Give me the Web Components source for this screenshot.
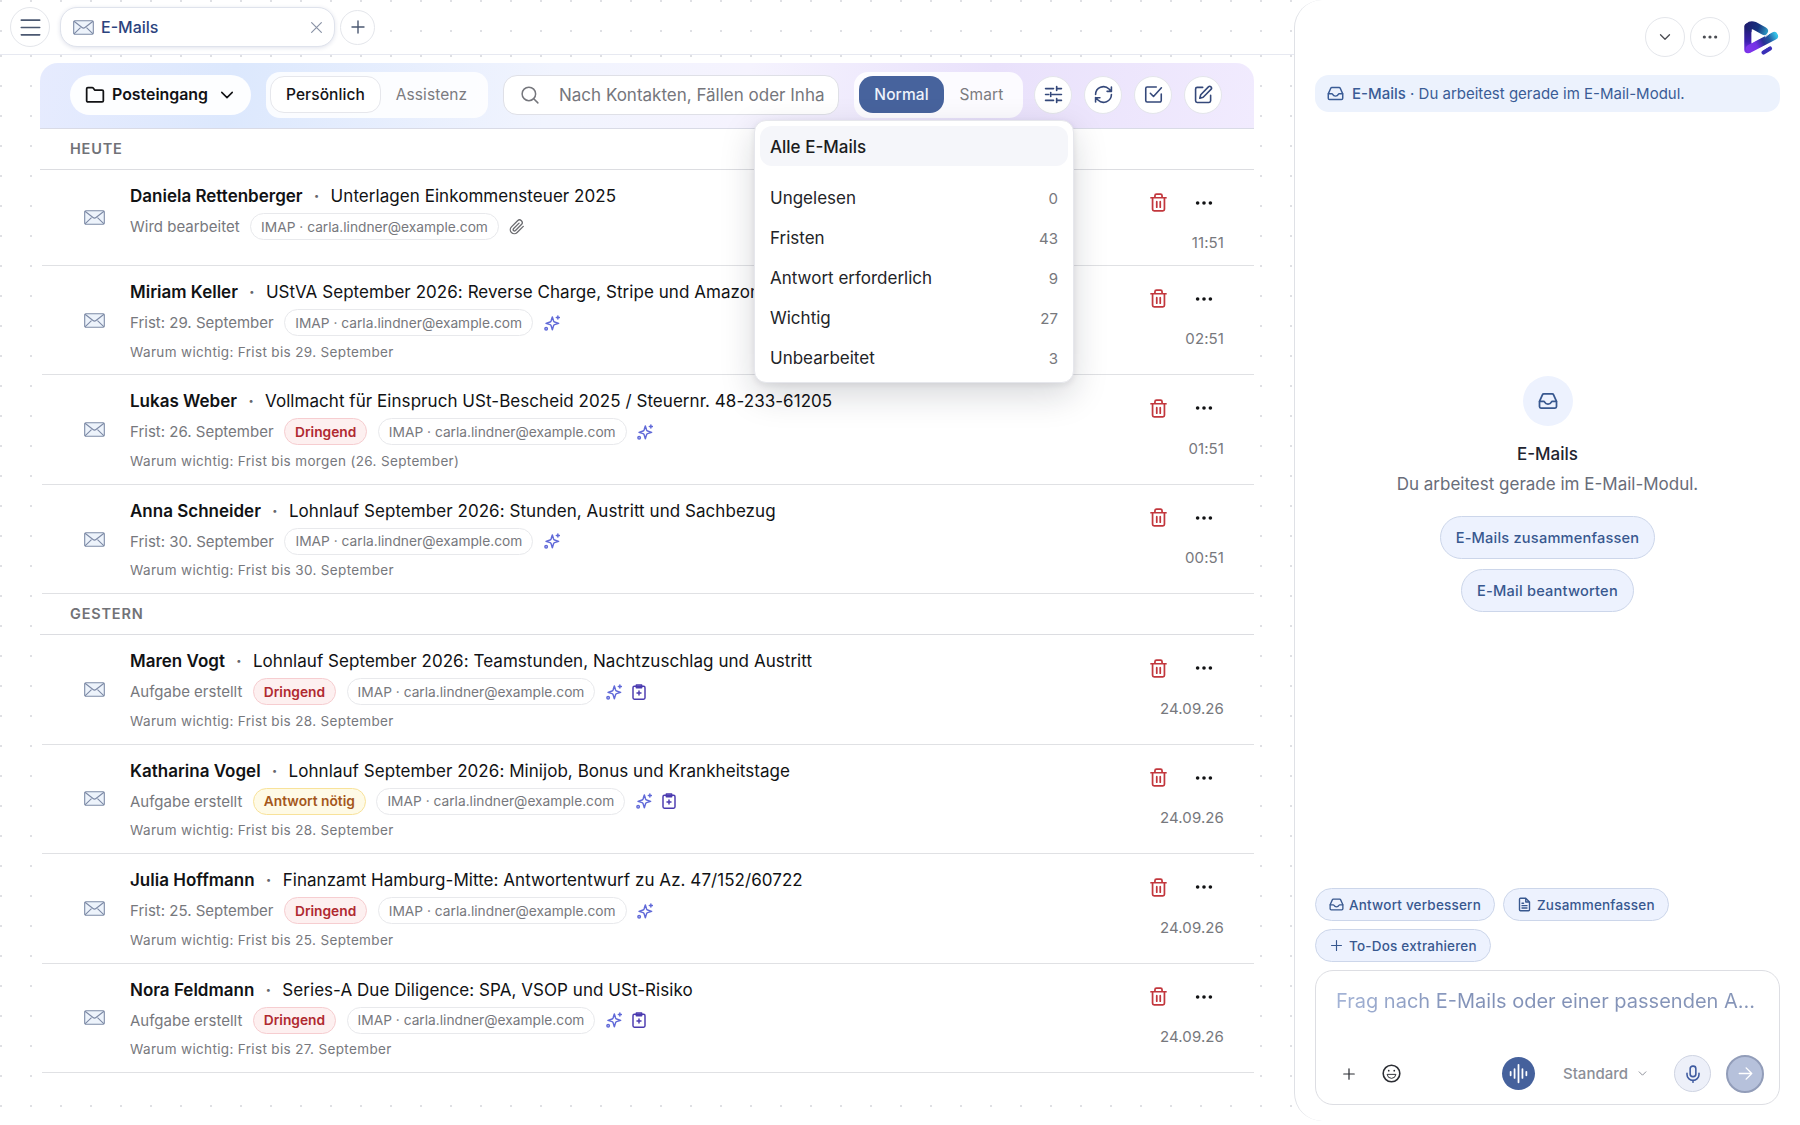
<!DOCTYPE html>
<html lang="de">
<head>
<meta charset="utf-8">
<title>E-Mails</title>
<style>
  html, body {
    margin: 0;
    height: 100%;
    overflow: hidden;
  }
  body {
    font-family: Inter, "Liberation Sans", sans-serif;
    color: #111214;
    background: #fff;
  }
</style>
</head>
<body>
<mail-app></mail-app>

<script>
const line = 'fill="none" stroke="currentColor" stroke-linecap="round" stroke-linejoin="round"'

// Icon markup, keyed by name. Everything is drawn on a 24px grid.
const icons = {
  menu: `<g ${line} stroke-width="1.9"><path d="M1.5 3.6h21M1.5 12h21M1.5 20.4h21"/></g>`,
  plus: `<g ${line} stroke-width="2.1"><path d="M12 3v18M3 12h18"/></g>`,
  close: `<g ${line} stroke-width="2.2"><path d="M3 3l18 18M21 3L3 21"/></g>`,
  chevron: `<g ${line} stroke-width="2.6"><path d="M3 7.5l9 9 9-9"/></g>`,
  folder: `<g ${line} stroke-width="2.1"><path d="M2 18.8V4.4c0-.8.6-1.4 1.4-1.4h5.2c.5 0 .9.2 1.2.6L11.6 6h8.9c.8 0 1.5.7 1.5 1.5v11.3c0 .8-.7 1.5-1.5 1.5h-17c-.8 0-1.5-.7-1.5-1.5z"/></g>`,
  search: `<g ${line} stroke-width="2"><circle cx="10.5" cy="10.5" r="9"/><path d="M17.3 17.3l5.2 5.2"/></g>`,
  sliders: `<g ${line} stroke-width="2.1"><path d="M2 4.5h10M17 4.5h5M16 2v5M2 12h4M10.5 12H22M8.5 9.5v5M2 19.5h10M17 19.5h5M16 17v5"/></g>`,
  refresh: `<g ${line} stroke-width="2"><path d="M2 12a10 10 0 0 1 17-7l3 3M22 2.5V8h-5.5M22 12a10 10 0 0 1-17 7l-3-3M2 21.5V16h5.5"/></g>`,
  check: `<g ${line} stroke-width="2"><path d="M15.5 2.5H4A1.8 1.8 0 0 0 2.2 4.3v15.4A1.8 1.8 0 0 0 4 21.5h16a1.8 1.8 0 0 0 1.8-1.8V11.5M8 10.5l4 4L22 3.5"/></g>`,
  edit: `<g ${line} stroke-width="2"><path d="M11 3H4a2 2 0 0 0-2 2v15a2 2 0 0 0 2 2h15a2 2 0 0 0 2-2v-7"/><path d="M18.2 2.4a2.2 2.2 0 0 1 3.2 3.2l-9.8 9.8-4.3 1.3 1.2-4.4z"/></g>`,
  trash: `<g ${line} stroke-width="2.2"><path d="M2.5 6h19M4.500 6v14.500A2 2 0 0 0 6.500 22.500h11a2 2 0 0 0 2-2V6M7.500 5.500V3.500A2 2 0 0 1 9.500 1.500h5a2 2 0 0 1 2 2v2M9.800 11v7M14.200 11v7"/></g>`,
  dots: `<g fill="currentColor"><circle cx="3.5" cy="12" r="2.4"/><circle cx="12" cy="12" r="2.4"/><circle cx="20.5" cy="12" r="2.4"/></g>`,
  clip: `<g ${line} stroke-width="2"><path d="M21.4 11.1l-9.2 9.2a6 6 0 0 1-8.5-8.5l9.2-9.2a4 4 0 0 1 5.7 5.7l-9.2 9.2a2 2 0 0 1-2.8-2.8l8.5-8.5"/></g>`,
  sparkle: `<g ${line} stroke-width="2.2"><path d="M12.5 3l1.9 6.1a2.5 2.5 0 0 0 1.5 1.5l6.1 1.9-6.1 1.9a2.5 2.5 0 0 0-1.5 1.5l-1.9 6.1-1.9-6.1a2.5 2.5 0 0 0-1.5-1.5l-6.1-1.9 6.1-1.9a2.5 2.5 0 0 0 1.5-1.5z"/><path d="M20.8 1.5v4.6M18.5 3.8h4.6"/><circle cx="3.2" cy="20.5" r="1.9"/></g>`,
  task: `<g ${line} stroke-width="2.2"><rect x="3" y="3.5" width="18" height="19.3" rx="2"/><path d="M8 1.5h8v4.2H8zM12 10.5v6M9 13.5h6"/></g>`,
  inbox: `<g ${line} stroke-width="2.1"><path d="M1.8 12.5L5.3 4.6A1.8 1.8 0 0 1 7 3.5h10a1.8 1.8 0 0 1 1.7 1.1l3.5 7.9v6.2a1.8 1.8 0 0 1-1.8 1.8H3.6a1.8 1.8 0 0 1-1.8-1.8z"/><path d="M2 12.5h4.8c.6 0 .9.3 1.2.8.7 1.4 2 2.4 4 2.4s3.3-1 4-2.4c.3-.5.6-.8 1.2-.8H22"/></g>`,
  doc: `<g ${line} stroke-width="2.2"><path d="M14 2H5.5A1.5 1.5 0 0 0 4 3.5v17A1.5 1.5 0 0 0 5.5 22h13a1.5 1.5 0 0 0 1.5-1.5V8zM14 2v6h6M8 10h2.5M8 13.8h8M8 17.5h8"/></g>`,
  smile: `<g ${line}><circle cx="12" cy="12" r="10.5" stroke-width="2"/><path d="M6.5 13.6a5.6 5.6 0 0 0 11 0z" stroke-width="1.2"/></g><circle cx="8.5" cy="8.5" r="1.1" fill="currentColor"/><circle cx="15.5" cy="8.5" r="1.1" fill="currentColor"/>`,
  wave: `<g ${line} stroke-width="2"><path d="M3 10v4M7.5 7v10M12 2v20M16.5 7v10M21 10v4"/></g>`,
  mic: `<g ${line} stroke-width="2.1"><rect x="8.2" y="1.5" width="7.6" height="14" rx="3.4"/><path d="M4 11v1.5a8 8 0 0 0 16 0V11M12 20.5V23"/></g>`,
  arrow: `<g ${line} stroke-width="2.2"><path d="M2 12h20M13 3l9 9-9 9"/></g>`
}

/**
 * Draws one of the named icons at the given size.
 */
customElements.define('app-icon', class extends HTMLElement {
  connectedCallback () {
    const size = this.getAttribute('size') || 20
    this.attachShadow({ mode: 'open' }).innerHTML = `
      <style>
        :host { display: inline-flex; flex: none; width: ${size}px; height: ${size}px; }
        svg { display: block; width: 100%; height: 100%; }
      </style>
      <svg viewBox="0 0 24 24">${icons[this.getAttribute('name')]}</svg>`
  }
})

/**
 * The small two-tone envelope used in the tab and in the list.
 */
customElements.define('mail-envelope', class extends HTMLElement {
  connectedCallback () {
    this.attachShadow({ mode: 'open' }).innerHTML = `
      <style>
        :host { display: inline-flex; flex: none; width: 21px; height: 15px; }
        svg { display: block; width: 100%; height: 100%; }
      </style>
      <svg viewBox="0 0 21 15" fill="none" stroke="#7d8aa6" stroke-width="1.1">
        <rect x=".7" y=".7" width="19.6" height="13.6" rx="1.2" fill="#edf3fb"/>
        <path d="M1 1.2l8 6.3a2.4 2.4 0 0 0 3 0l8-6.3M1 13.8l6.5-6.2M20 13.8l-6.5-6.2"/>
      </svg>`
  }
})

/**
 * The assistant logo.
 */
customElements.define('brand-logo', class extends HTMLElement {
  connectedCallback () {
    this.attachShadow({ mode: 'open' }).innerHTML = `
      <style>
        :host { display: inline-flex; flex: none; width: 36px; height: 36px; }
      </style>
      <svg width="36" height="36" viewBox="0 0 36 36" fill="none" stroke-linecap="round" stroke-linejoin="round">
        <defs>
          <linearGradient id="a" x1="4" y1="4" x2="26" y2="12" gradientUnits="userSpaceOnUse">
            <stop offset="0" stop-color="#1e1e70"/><stop offset=".5" stop-color="#17357f"/><stop offset="1" stop-color="#33acd0"/>
          </linearGradient>
          <linearGradient id="b" x1="5" y1="31" x2="34" y2="15" gradientUnits="userSpaceOnUse">
            <stop offset="0" stop-color="#8136ec"/><stop offset=".32" stop-color="#7430e6"/><stop offset=".55" stop-color="#2a2f96"/><stop offset=".75" stop-color="#23579f"/><stop offset="1" stop-color="#35c3e8"/>
          </linearGradient>
          <linearGradient id="c" x1="0" y1="6" x2="0" y2="30" gradientUnits="userSpaceOnUse">
            <stop offset="0" stop-color="#1e1e70"/><stop offset=".6" stop-color="#3c1fae"/><stop offset="1" stop-color="#7a33e8"/>
          </linearGradient>
        </defs>
        <path d="M5 6v22.500" stroke="url(#c)" stroke-width="7.500"/>
        <path d="M7 27.500L31 15" stroke="url(#b)" stroke-width="8"/>
        <path d="M6 5.500Q8 3.500 11.500 4.800L21 10" stroke="url(#a)" stroke-width="8"/>
        <path d="M20.500 31.500l6.500-4" stroke="#3a2fb8" stroke-width="4.200"/>
        <path d="M9 11.500l8.500 4.800L9 21.500z" fill="#fff" stroke="#fff" stroke-width=".6"/>
        <path d="M22.500 15.700l5-4" stroke="#fff" stroke-width="1"/>
        <path d="M17 30.200l9-5.200" stroke="#fff" stroke-width="1"/>
      </svg>`
  }
})

/**
 * Round button; size and colours come in through custom properties.
 */
customElements.define('round-button', class extends HTMLElement {
  connectedCallback () {
    this.attachShadow({ mode: 'open' }).innerHTML = `
      <style>
        :host { display: inline-flex; flex: none; }
        button {
          all: unset;
          box-sizing: border-box;
          width: var(--size, 38px);
          height: var(--size, 38px);
          border-radius: 50%;
          border: var(--line, 1px solid #e4e6eb);
          background: var(--fill, #fff);
          display: flex;
          align-items: center;
          justify-content: center;
        }
      </style>
      <button><slot></slot></button>`
  }
})

customElements.define('top-bar', class extends HTMLElement {
  connectedCallback () {
    this.attachShadow({ mode: 'open' }).innerHTML = `
      <style>
        :host {
          box-sizing: border-box;
          display: flex;
          align-items: center;
          height: 55px;
          padding: 0 10px;
          border-bottom: 1px solid #e7e9f1;
          background: #fff radial-gradient(circle, #dfe0e4 1px, transparent 1.5px) -14px -14px / 30px 30px;
          color: #4b5871;
        }
        .tab {
          box-sizing: border-box;
          display: flex;
          align-items: center;
          width: 275px;
          height: 40px;
          margin: 0 5px 0 10px;
          padding: 0 11px 0 12px;
          border: 1px solid #dfe3ec;
          border-radius: 17px;
          background: #fff;
          box-shadow: 0 1px 4px rgba(40, 60, 120, .14);
        }
        .tab span {
          flex: 1;
          margin-left: 7px;
          font-size: 16px;
          font-weight: 500;
          color: #2b437e;
        }
        .tab app-icon { color: #8a93a6; }
      </style>
      <round-button style="--size:40px"><app-icon name="menu" size="21"></app-icon></round-button>
      <div class="tab">
        <mail-envelope></mail-envelope>
        <span>E-Mails</span>
        <app-icon name="close" size="13"></app-icon>
      </div>
      <round-button style="--size:35px"><app-icon name="plus" size="16"></app-icon></round-button>`
  }
})

/**
 * Two-option switch. The first option is the selected one.
 */
customElements.define('segmented-control', class extends HTMLElement {
  connectedCallback () {
    const [first, second] = this.getAttribute('options').split(',')
    this.attachShadow({ mode: 'open' }).innerHTML = `
      <style>
        :host {
          box-sizing: border-box;
          display: inline-flex;
          align-items: center;
          flex: none;
          height: 46px;
          padding: 0 6px 0 4px;
          border-radius: 14px;
          background: rgba(255, 255, 255, .85);
          font-size: 15.5px;
          letter-spacing: .1px;
          color: #7b7b80;
        }
        .on, .off {
          box-sizing: border-box;
          display: flex;
          align-items: center;
          justify-content: center;
          height: 37px;
          border-radius: 14px;
        }
        .on {
          width: 111px;
          border: 1px solid #e6e7ec;
          background: #fff;
          color: #131316;
          font-weight: 500;
        }
        .off { width: 101px; }
        :host([primary]) { padding-left: 5px; padding-right: 4px; }
        :host([primary]) .on {
          width: 85px;
          border: 0;
          background: #47639d;
          color: #eef2fb;
        }
        :host([primary]) .off { width: 75px; }
      </style>
      <span class="on">${first}</span><span class="off">${second}</span>`
  }
})

customElements.define('mail-toolbar', class extends HTMLElement {
  connectedCallback () {
    this.attachShadow({ mode: 'open' }).innerHTML = `
      <style>
        :host {
          box-sizing: border-box;
          display: flex;
          align-items: center;
          height: 66px;
          padding: 0 30px 2px 30px;
          border-bottom: 1px solid #d9dbe6;
          border-radius: 18px 18px 0 0;
          background: linear-gradient(100deg, #e6ebfe 0%, #dce8fd 16%, #f1f4fe 42%, #f5f3fe 58%, #e9e1fb 78%, #f1ebfe 100%);
        }
        .folder {
          box-sizing: border-box;
          display: flex;
          align-items: center;
          width: 181px;
          height: 40px;
          margin-right: 15px;
          padding: 0 17px 0 15px;
          border-radius: 20px;
          background: rgba(255, 255, 255, .92);
          font-size: 15.9px;
          font-weight: 600;
        }
        .folder span { flex: 1; margin-left: 7px; }
        .search {
          box-sizing: border-box;
          display: flex;
          align-items: center;
          width: 336px;
          height: 40px;
          margin: 0 15px;
          padding: 0 13px 0 17px;
          border: 1px solid #dfe0e7;
          border-radius: 14px;
          background: #fff;
          color: #75767c;
        }
        .search span {
          margin-left: 20px;
          white-space: nowrap;
          font-size: 17px;
        }
        .tools {
          display: flex;
          gap: 12px;
          margin-left: 11px;
          color: #34487a;
        }
      </style>
      <div class="folder">
        <app-icon name="folder" size="20"></app-icon>
        <span>Posteingang</span>
        <app-icon name="chevron" size="14"></app-icon>
      </div>
      <segmented-control options="Persönlich,Assistenz"></segmented-control>
      <div class="search">
        <app-icon name="search" size="18"></app-icon>
        <span>Nach Kontakten, Fällen oder Inha</span>
      </div>
      <segmented-control primary options="Normal,Smart"></segmented-control>
      <div class="tools">
        <round-button><app-icon name="sliders" size="19"></app-icon></round-button>
        <round-button><app-icon name="refresh" size="19"></app-icon></round-button>
        <round-button><app-icon name="check" size="19"></app-icon></round-button>
        <round-button><app-icon name="edit" size="19"></app-icon></round-button>
      </div>`
  }
})

/**
 * List heading and the rows that belong to it.
 */
customElements.define('mail-group', class extends HTMLElement {
  connectedCallback () {
    this.attachShadow({ mode: 'open' }).innerHTML = `
      <style>
        :host { display: block; }
        h2 {
          box-sizing: border-box;
          height: 41px;
          margin: 0;
          padding-left: 30px;
          border-bottom: 1px solid #dcdde1;
          line-height: 40px;
          font-size: 14.5px;
          font-weight: 600;
          letter-spacing: .8px;
          color: #717277;
        }
      </style>
      <h2>${this.getAttribute('label')}</h2>
      <slot></slot>`
  }
})

customElements.define('mail-chip', class extends HTMLElement {
  connectedCallback () {
    this.attachShadow({ mode: 'open' }).innerHTML = `
      <style>
        :host {
          box-sizing: border-box;
          display: inline-flex;
          align-items: center;
          flex: none;
          height: 27px;
          padding: 0 10px;
          border: 1px solid #e8e9ec;
          border-radius: 14px;
          font-size: 13.75px;
          color: #77787d;
        }
        :host([tone=urgent]) {
          border-color: #f6cdd0;
          background: #fdf0f0;
          color: #b02a30;
          font-weight: 600;
        }
        :host([tone=reply]) {
          border-color: #f8e29a;
          background: #fefae6;
          color: #a4571b;
          font-weight: 600;
        }
      </style>
      <slot></slot>`
  }
})

customElements.define('mail-row', class extends HTMLElement {
  connectedCallback () {
    const get = name => this.getAttribute(name)
    const chip = { urgent: 'Dringend', reply: 'Antwort nötig' }[get('flag')]
    this.attachShadow({ mode: 'open' }).innerHTML = `
      <style>
        :host {
          box-sizing: border-box;
          display: grid;
          grid-template-columns: 20px 1fr auto;
          column-gap: 25px;
          height: 109.45px;
          margin-left: 2px;
          padding: 0 30px 0 43px;
          border-bottom: 1px solid #e0e1e4;
        }
        :host([compact]) { height: 96px; }
        mail-envelope { align-self: center; margin-left: -1px; }
        .body { min-width: 0; padding-top: 14px; }
        .title, .meta { display: flex; align-items: center; white-space: nowrap; }
        .title { height: 24px; font-size: 17px; }
        .title b { font-weight: 600; }
        .title i { width: 28px; text-align: center; font-style: normal; font-weight: 700; color: #66676c; }
        .title span { letter-spacing: .05px; }
        .meta { height: 27px; margin-top: 5px; gap: 10.5px; font-size: 15px; color: #77787d; }
        .meta .marks { display: flex; gap: 9px; color: #6069d8; }
        .marks .task { color: #4b3bb0; }
        .marks .clip { color: #6b6c70; }
        .why { margin-top: 5.6px; line-height: 20px; font-size: 13.5px; letter-spacing: .35px; color: #77787d; }
        .side { display: flex; flex-direction: column; align-items: flex-end; padding-top: 14.4px; }
        .buttons { display: flex; align-items: center; height: 37px; gap: 27px; padding-right: 11px; }
        .trash { color: #c2373d; }
        .time { margin-top: 12px; line-height: 20px; font-size: 15px; letter-spacing: .1px; color: #77787d; }
      </style>
      <mail-envelope></mail-envelope>
      <div class="body">
        <div class="title"><b>${get('from')}</b><i>·</i><span>${get('subject')}</span></div>
        <div class="meta">
          <span>${get('status')}</span>
          ${chip ? `<mail-chip tone="${get('flag')}">${chip}</mail-chip>` : ''}
          <mail-chip>IMAP · carla.lindner@example.com</mail-chip>
          <span class="marks">${get('marks').split(' ').map(name => `<app-icon class="${name}" name="${name}" size="16"></app-icon>`).join('')}</span>
        </div>
        ${get('why') ? `<div class="why">Warum wichtig: ${get('why')}</div>` : ''}
      </div>
      <div class="side">
        <div class="buttons">
          <app-icon class="trash" name="trash" size="19"></app-icon>
          <app-icon name="dots" size="18"></app-icon>
        </div>
        <div class="time">${get('time')}</div>
      </div>`
  }
})

/**
 * Filter menu that opens below the toolbar.
 */
customElements.define('filter-menu', class extends HTMLElement {
  #items = [
    ['Ungelesen', 0],
    ['Fristen', 43],
    ['Antwort erforderlich', 9],
    ['Wichtig', 27],
    ['Unbearbeitet', 3]
  ]

  connectedCallback () {
    this.attachShadow({ mode: 'open' }).innerHTML = `
      <style>
        :host {
          box-sizing: border-box;
          display: block;
          width: 320px;
          height: 263px;
          padding: 5px 5px 0;
          border: 1px solid #e6e7ec;
          border-radius: 12px;
          background: #fff;
          box-shadow: 0 12px 34px rgba(20, 25, 40, .17), 0 2px 6px rgba(20, 25, 40, .08);
        }
        div {
          box-sizing: border-box;
          display: flex;
          align-items: center;
          justify-content: space-between;
          height: 40px;
          padding: 0 10px;
          font-size: 17px;
          color: #232428;
        }
        .all {
          margin-bottom: 12px;
          padding-top: 2px;
          border-radius: 12px;
          background: #f5f6fa;
          font-weight: 500;
          color: #1b1c20;
        }
        span { font-size: 15px; color: #77787d; }
      </style>
      <div class="all">Alle E-Mails</div>
      ${this.#items.map(([label, count]) => `<div>${label}<span>${count}</span></div>`).join('')}`
  }
})

/**
 * Blue pill used for the suggestions of the assistant.
 */
customElements.define('suggestion-pill', class extends HTMLElement {
  connectedCallback () {
    const icon = this.getAttribute('icon')
    this.attachShadow({ mode: 'open' }).innerHTML = `
      <style>
        :host {
          box-sizing: border-box;
          display: inline-flex;
          align-items: center;
          gap: 5px;
          height: 33px;
          padding: 0 13px;
          border: 1px solid #ccd6ea;
          border-radius: 22px;
          background: #edf2fe;
          color: #38588f;
          font-size: 13.5px;
          font-weight: 500;
          letter-spacing: .2px;
          white-space: nowrap;
        }
        :host([large]) {
          height: 43px;
          padding: 0 15px;
          font-size: 14.6px;
        }
        app-icon[name=plus] { transform: scale(.88); }
      </style>
      ${icon ? `<app-icon name="${icon}" size="15"></app-icon>` : ''}<slot></slot>`
  }
})

customElements.define('prompt-box', class extends HTMLElement {
  connectedCallback () {
    this.attachShadow({ mode: 'open' }).innerHTML = `
      <style>
        :host {
          box-sizing: border-box;
          display: flex;
          flex-direction: column;
          justify-content: space-between;
          height: 135px;
          padding: 14px 15px 12px 20px;
          border: 1px solid #dddee3;
          border-radius: 18px;
          background: #fff;
        }
        .placeholder {
          line-height: 32px;
          font-size: 20px;
          white-space: nowrap;
          color: transparent;
          background: linear-gradient(90deg, #a3b3d6, #8292b8 30%, #8695b8);
          -webkit-background-clip: text;
          background-clip: text;
        }
        .actions { display: flex; align-items: center; height: 37px; color: #2b2d33; }
        .actions > app-icon:first-child { margin-left: 6px; }
        .smile { margin-left: 26px; }
        .mode { display: flex; align-items: center; gap: 10px; margin: 0 27px 0 28px; font-size: 15px; font-weight: 500; color: #8c8f98; }
        .wave { margin-left: auto; color: #fff; }
        .mic { color: #3f5ba0; }
        .send { margin-left: 15px; color: #fff; }
      </style>
      <div class="placeholder">Frag nach E-Mails oder einer passenden A...</div>
      <div class="actions">
        <app-icon name="plus" size="14"></app-icon>
        <app-icon class="smile" name="smile" size="19"></app-icon>
        <round-button class="wave" style="--size:33px;--fill:#45619c;--line:0"><app-icon name="wave" size="21"></app-icon></round-button>
        <span class="mode">Standard <app-icon name="chevron" size="9"></app-icon></span>
        <round-button class="mic" style="--size:37px;--fill:#edf0f9;--line:1px solid #cfd4e2"><app-icon name="mic" size="18"></app-icon></round-button>
        <round-button class="send" style="--size:38px;--fill:#b6c1db;--line:2px solid #929db9"><app-icon name="arrow" size="15"></app-icon></round-button>
      </div>`
  }
})

customElements.define('assistant-panel', class extends HTMLElement {
  connectedCallback () {
    this.attachShadow({ mode: 'open' }).innerHTML = `
      <style>
        :host {
          box-sizing: border-box;
          display: flex;
          flex-direction: column;
          width: 506px;
          height: 1121px;
          padding: 17px 20px 16px;
          border-left: 1px solid #dfe1e6;
          border-radius: 28px 0 0 28px;
          background: #fff;
        }
        .head {
          display: flex;
          align-items: center;
          justify-content: flex-end;
          gap: 5px;
          height: 40px;
          color: #4a4c52;
        }
        brand-logo { margin: 3px 1px 0 8px; }
        .context {
          display: flex;
          align-items: center;
          gap: 8px;
          height: 37px;
          margin-top: 18px;
          padding: 0 12px;
          border-radius: 14px;
          background: #ecf2fd;
          font-size: 15px;
          color: #3a5c96;
        }
        .context b { font-weight: 500; }
        .empty {
          flex: 1;
          display: flex;
          flex-direction: column;
          align-items: center;
          padding-top: 264px;
        }
        .badge {
          display: flex;
          align-items: center;
          justify-content: center;
          width: 50px;
          height: 50px;
          border-radius: 50%;
          background: #edf2fe;
          color: #38588f;
        }
        h3 { margin: 16px 0 0; line-height: 24px; font-size: 17px; font-weight: 500; color: #1f2430; }
        p { margin: 6px 0 20px; line-height: 24px; font-size: 17px; color: #686d79; }
        .empty suggestion-pill { margin-bottom: 10px; }
        .pills { display: flex; flex-wrap: wrap; gap: 8px; margin-bottom: 8px; }
      </style>
      <div class="head">
        <round-button style="--size:40px"><app-icon name="chevron" size="12"></app-icon></round-button>
        <round-button style="--size:40px"><app-icon name="dots" size="16"></app-icon></round-button>
        <brand-logo></brand-logo>
      </div>
      <div class="context">
        <app-icon name="inbox" size="17"></app-icon>
        <span><b>E-Mails</b> · Du arbeitest gerade im E-Mail-Modul.</span>
      </div>
      <div class="empty">
        <div class="badge"><app-icon name="inbox" size="20"></app-icon></div>
        <h3>E-Mails</h3>
        <p>Du arbeitest gerade im E-Mail-Modul.</p>
        <suggestion-pill large>E-Mails zusammenfassen</suggestion-pill>
        <suggestion-pill large>E-Mail beantworten</suggestion-pill>
      </div>
      <div class="pills">
        <suggestion-pill icon="inbox">Antwort verbessern</suggestion-pill>
        <suggestion-pill icon="doc">Zusammenfassen</suggestion-pill>
        <suggestion-pill icon="plus">To-Dos extrahieren</suggestion-pill>
      </div>
      <prompt-box></prompt-box>`
  }
})

customElements.define('mail-app', class extends HTMLElement {
  connectedCallback () {
    this.attachShadow({ mode: 'open' }).innerHTML = `
      <style>
        :host {
          display: grid;
          grid-template-columns: 1294px 506px;
          height: 1125px;
          background: #fff radial-gradient(circle, #dfe0e4 1px, transparent 1.5px) -14px 11px / 30px 30px;
        }
        .card {
          position: relative;
          width: 1214px;
          height: 1036px;
          margin: 8px 0 0 40px;
          border-radius: 18px 18px 0 0;
          background: #fff;
        }
        /* The menu lies over the list. */
        filter-menu { position: absolute; top: 57px; left: 714px; }
      </style>
      <main>
        <top-bar></top-bar>
        <div class="card">
          <mail-toolbar></mail-toolbar>
          <mail-group label="HEUTE">
            <mail-row compact from="Daniela Rettenberger" subject="Unterlagen Einkommensteuer 2025" status="Wird bearbeitet" marks="clip" time="11:51"></mail-row>
            <mail-row from="Miriam Keller" subject="UStVA September 2026: Reverse Charge, Stripe und Amazon" status="Frist: 29. September" marks="sparkle" why="Frist bis 29. September" time="02:51"></mail-row>
            <mail-row from="Lukas Weber" subject="Vollmacht für Einspruch USt-Bescheid 2025 / Steuernr. 48-233-61205" status="Frist: 26. September" flag="urgent" marks="sparkle" why="Frist bis morgen (26. September)" time="01:51"></mail-row>
            <mail-row from="Anna Schneider" subject="Lohnlauf September 2026: Stunden, Austritt und Sachbezug" status="Frist: 30. September" marks="sparkle" why="Frist bis 30. September" time="00:51"></mail-row>
          </mail-group>
          <mail-group label="GESTERN">
            <mail-row from="Maren Vogt" subject="Lohnlauf September 2026: Teamstunden, Nachtzuschlag und Austritt" status="Aufgabe erstellt" flag="urgent" marks="sparkle task" why="Frist bis 28. September" time="24.09.26"></mail-row>
            <mail-row from="Katharina Vogel" subject="Lohnlauf September 2026: Minijob, Bonus und Krankheitstage" status="Aufgabe erstellt" flag="reply" marks="sparkle task" why="Frist bis 28. September" time="24.09.26"></mail-row>
            <mail-row from="Julia Hoffmann" subject="Finanzamt Hamburg-Mitte: Antwortentwurf zu Az. 47/152/60722" status="Frist: 25. September" flag="urgent" marks="sparkle" why="Frist bis 25. September" time="24.09.26"></mail-row>
            <mail-row from="Nora Feldmann" subject="Series-A Due Diligence: SPA, VSOP und USt-Risiko" status="Aufgabe erstellt" flag="urgent" marks="sparkle task" why="Frist bis 27. September" time="24.09.26"></mail-row>
          </mail-group>
          <filter-menu></filter-menu>
        </div>
      </main>
      <assistant-panel></assistant-panel>`
  }
})
</script>
</body>
</html>
